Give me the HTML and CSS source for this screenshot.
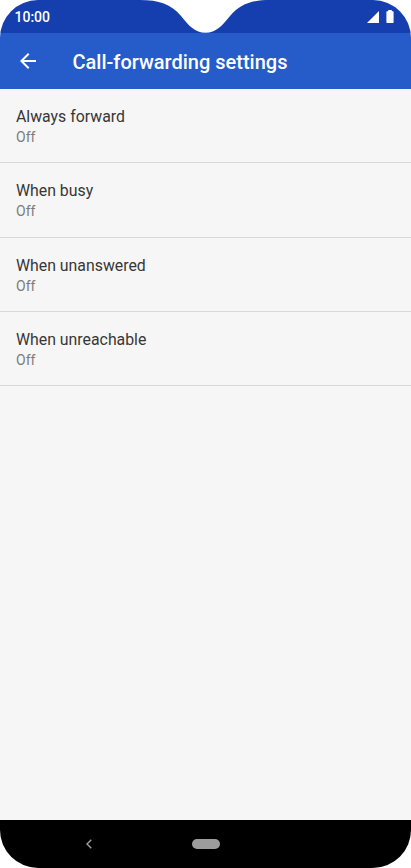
FILE: index.html
```html
<!DOCTYPE html>
<html lang="en-gb">
<head>
    <meta charset="utf-8">
    <meta content="initial-scale=1, width=device-width" name="viewport">
    <title>Call-forwarding settings</title>
    <link rel="stylesheet" href="styles.css">
</head>

<body>
    <div class="phone">
        <div class="status-bar">
            <span class="time">10:00</span>
            <svg class="signal" viewBox="0 0 12 12" width="12" height="12"><path d="M12 0v12H0z"/></svg>
            <svg class="battery" viewBox="0 0 8 13" width="8" height="13"><path d="M2.200 0h3.600v1.200H7q.6 0 .6.600v10.500q0 .6-.6.600H1q-.6 0-.6-.600V1.800q0-.6.6-.600h1.200z"/></svg>
            <svg class="notch" viewBox="0 0 130 33" width="130" height="33"><path d="M0 0C19 0 31 4 41 16C49 26 55 32.700 65.500 32.700C76 32.700 82 26 90 16C100 4 112 0 130 0z"/></svg>
        </div>
        <header class="app-bar">
            <svg class="back" viewBox="0 0 24 24" width="24" height="24"><path d="M20 11H7.830l5.590-5.590L12 4l-8 8 8 8 1.410-1.410L7.830 13H20z"/></svg>
            <h1>Call-forwarding settings</h1>
        </header>
        <ul class="settings">
            <li>
                <h2>Always forward</h2>
                <p>Off</p>
            </li>
            <li>
                <h2>When busy</h2>
                <p>Off</p>
            </li>
            <li>
                <h2>When unanswered</h2>
                <p>Off</p>
            </li>
            <li>
                <h2>When unreachable</h2>
                <p>Off</p>
            </li>
        </ul>
        <nav class="nav-bar">
            <svg class="nav-back" viewBox="0 0 6 10" width="6" height="10"><path d="M5.300.800L1 5l4.300 4.200"/></svg>
            <span class="nav-home"></span>
        </nav>
    </div>
</body>
</html>
```
FILE: styles.css
```css
:root {
    box-sizing: border-box;
}
:root * {
    box-sizing: inherit;
}
body {
    background-color: #FFF;
    color: #373737;
    font-family: Roboto, sans-serif;
    margin: 0;
}
svg {
    display: block;
    fill: #FFF;
}
.phone {
    background-color: #F6F6F6;
    border-radius: 38px;
    display: flex;
    flex-direction: column;
    height: 868px;
    overflow: hidden;
    width: 411px;
}
.status-bar {
    align-items: center;
    background-color: #153EAF;
    color: #FFF;
    display: flex;
    height: 33px;
    padding: 0 17px 0 14.5px;
    position: relative;
}
.time {
    flex: 1;
    font-size: 14px;
    font-weight: 500;
    line-height: 16px;
    padding-top: 1px;
}
.battery {
    margin-left: 7px;
}
/* Camera cut-out, lies over the middle of the status bar */
.notch {
    left: 140px;
    position: absolute;
    top: 0;
}
.app-bar {
    align-items: center;
    background-color: #265BCA;
    color: #FFF;
    display: flex;
    height: 56px;
    padding: 0 16px;
}
h1 {
    font-size: 20px;
    font-weight: 500;
    line-height: 24px;
    margin: 0 0 0 32.5px;
    padding-top: 2px;
}
.settings {
    flex: 1;
    list-style: none;
    margin: 0;
    padding: 0;
}
.settings li {
    border-bottom: 1px solid #D9D9D9;
    height: 74.25px;
    padding: 18.2px 16px 0;
}
h2 {
    font-size: 15.85px;
    font-weight: 400;
    line-height: 20px;
    margin: 0;
}
p {
    color: #7C7C7C;
    font-size: 14px;
    line-height: 20px;
    margin: 0;
}
.nav-bar {
    align-items: center;
    background-color: #000;
    display: flex;
    height: 48px;
    padding-left: 86px;
}
.nav-back {
    fill: none;
    stroke: #A0A0A0;
    stroke-width: 1.4;
}
.nav-home {
    background-color: #9C9C9C;
    border-radius: 5px;
    height: 10px;
    margin-left: 100px;
    width: 28px;
}
```
